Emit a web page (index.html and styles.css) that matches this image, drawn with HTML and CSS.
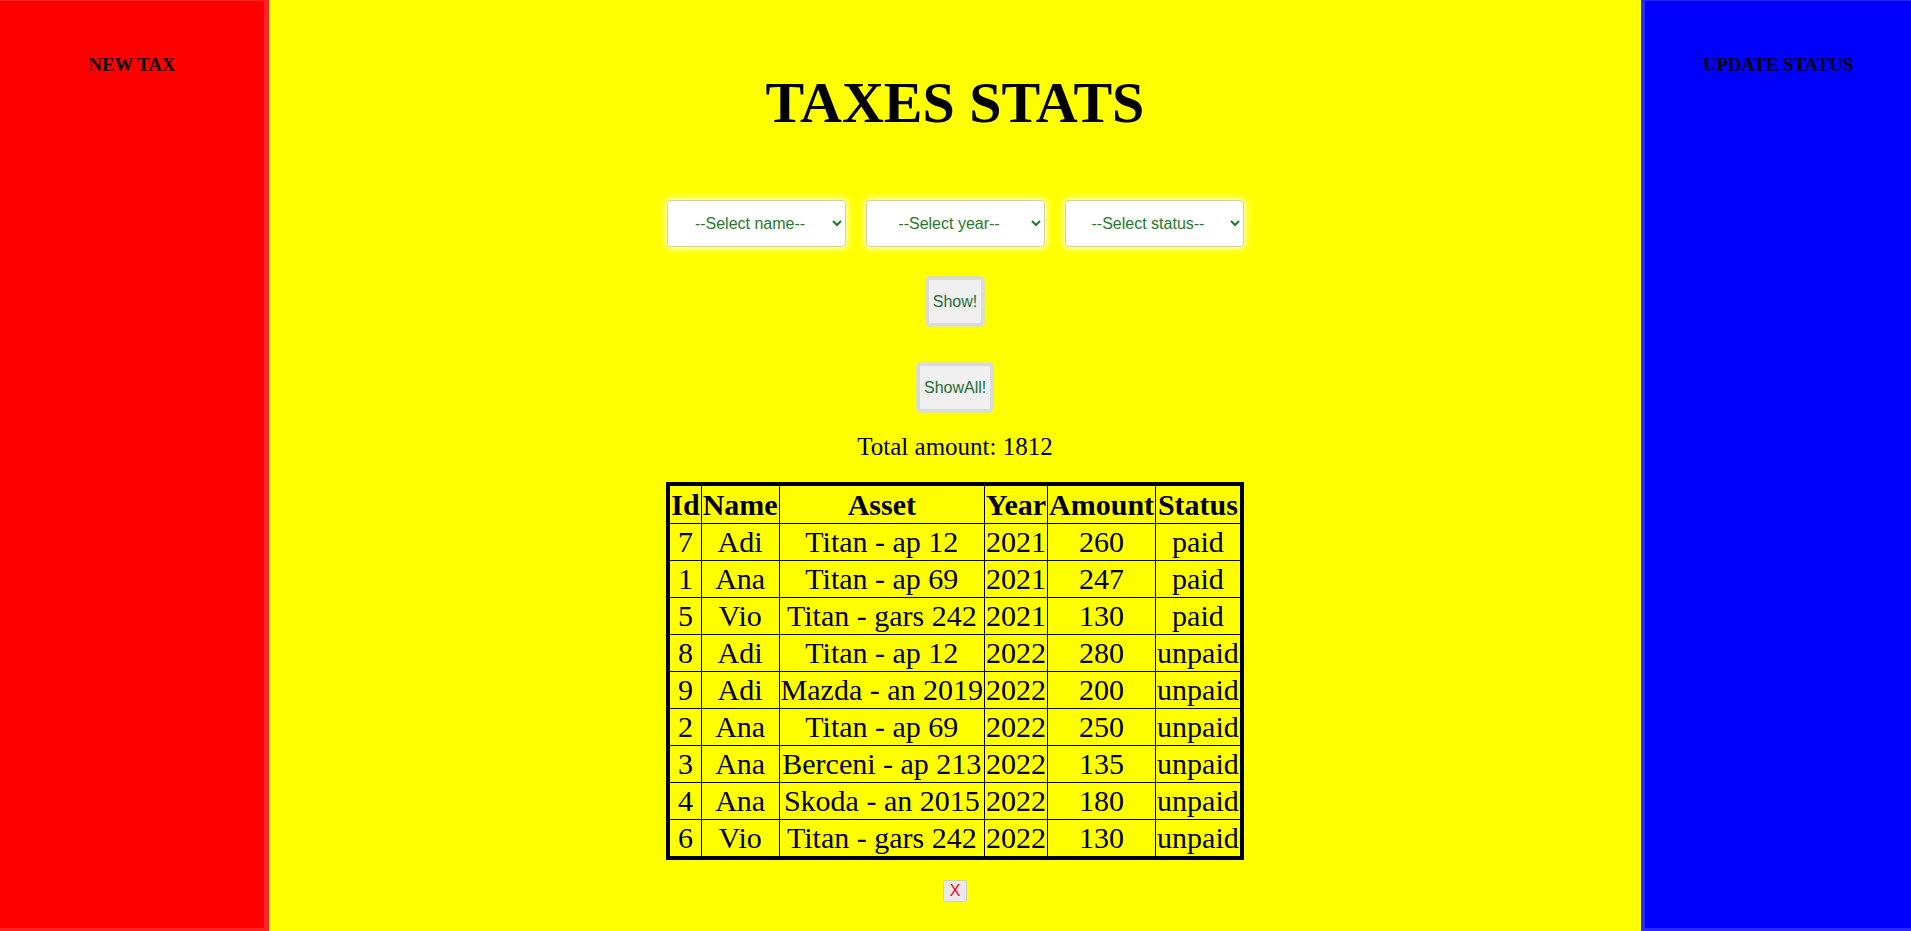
FILE: index.html
```html
<!DOCTYPE html>
<html>
<head>
<meta charset="utf-8">
<title>Taxes Stats</title>
<link rel="stylesheet" href="styles.css">
</head>
<body>
<div class="layout">
  <aside class="panel panel-red">
    <h3 class="panel-title">NEW TAX</h3>
  </aside>
  <main class="main">
    <h1 class="title">TAXES STATS</h1>
    <div class="filters">
      <select class="filter"><option>--Select name--</option></select>
      <select class="filter"><option>--Select year--</option></select>
      <select class="filter"><option>--Select status--</option></select>
    </div>
    <button class="btn btn-show"><span class="caret"></span>Show!</button>
    <button class="btn btn-showall">ShowAll!</button>
    <p class="total">Total amount: 1812</p>
    <table class="stats">
      <thead>
        <tr><th>Id</th><th>Name</th><th>Asset</th><th>Year</th><th>Amount</th><th>Status</th></tr>
      </thead>
      <tbody>
        <tr><td>7</td><td>Adi</td><td>Titan - ap 12</td><td>2021</td><td>260</td><td>paid</td></tr>
        <tr><td>1</td><td>Ana</td><td>Titan - ap 69</td><td>2021</td><td>247</td><td>paid</td></tr>
        <tr><td>5</td><td>Vio</td><td>Titan - gars 242</td><td>2021</td><td>130</td><td>paid</td></tr>
        <tr><td>8</td><td>Adi</td><td>Titan - ap 12</td><td>2022</td><td>280</td><td>unpaid</td></tr>
        <tr><td>9</td><td>Adi</td><td>Mazda - an 2019</td><td>2022</td><td>200</td><td>unpaid</td></tr>
        <tr><td>2</td><td>Ana</td><td>Titan - ap 69</td><td>2022</td><td>250</td><td>unpaid</td></tr>
        <tr><td>3</td><td>Ana</td><td>Berceni - ap 213</td><td>2022</td><td>135</td><td>unpaid</td></tr>
        <tr><td>4</td><td>Ana</td><td>Skoda - an 2015</td><td>2022</td><td>180</td><td>unpaid</td></tr>
        <tr><td>6</td><td>Vio</td><td>Titan - gars 242</td><td>2022</td><td>130</td><td>unpaid</td></tr>
      </tbody>
    </table>
    <button class="btn-close">X</button>
  </main>
  <aside class="panel panel-blue">
    <h3 class="panel-title">UPDATE STATUS</h3>
  </aside>
</div>
</body>
</html>
```

FILE: styles.css
```css
html, body {
  margin: 0;
  padding: 0;
  height: 100%;
  overflow: hidden;
}

body {
  font-family: "Liberation Serif", "Times New Roman", serif;
  background: #ffff00;
}

.layout {
  display: flex;
  height: 100vh;
}

.panel {
  box-sizing: border-box;
  display: flex;
  flex-direction: column;
  align-items: center;
  border-top: 1px solid;
  border-bottom: 3px solid;
}

.panel-red {
  width: 269px;
  background: #ff0000;
  border-color: #ff2424;
  border-right: 5px solid #ff2424;
}

.panel-blue {
  width: 270px;
  background: #0000ff;
  border-color: #2a2aff;
  border-left: 4px solid #2a2aff;
}

.panel-title {
  margin: 53px 0 0;
  font-size: 18.72px;
  line-height: 22px;
  font-weight: bold;
  color: #000;
}

.main {
  flex: 1;
  display: flex;
  flex-direction: column;
  align-items: center;
  background: #ffff00;
}

.title {
  margin: 70px 0 0;
  font-size: 58px;
  line-height: 66px;
  font-weight: bold;
}

.filters {
  display: flex;
  gap: 20px;
  margin-top: 64px;
}

.filter {
  box-sizing: border-box;
  width: 179px;
  height: 47px;
  padding: 0 8px;
  font-family: "Liberation Sans", Arial, sans-serif;
  font-size: 16px;
  color: #1f7a2a;
  text-align: center;
  text-align-last: center;
  background: #fff;
  border: 1px solid #cfcfb0;
  border-radius: 4px;
  box-shadow: 0 0 6px 2px rgba(255, 255, 255, 0.75);
}

.btn {
  box-sizing: border-box;
  height: 49px;
  padding: 0 4px;
  font-family: "Liberation Sans", Arial, sans-serif;
  font-size: 16px;
  color: #1f6e35;
  background: #efefef;
  border: 3px solid #dadada;
  border-radius: 4px;
  box-shadow: 0 0 0 1px #e2e2b0;
}

.btn-show {
  width: 58px;
  margin-top: 30px;
  display: flex;
  align-items: center;
  justify-content: center;
}

.caret {
  display: inline-block;
  width: 1px;
  height: 18px;
  background: #1f6e35;
}

.btn-showall {
  width: 76px;
  margin-top: 37px;
}

.total {
  margin: 20px 0 0;
  font-size: 25px;
  line-height: 29px;
}

.stats {
  margin-top: 21px;
  border-collapse: collapse;
  border: 4px solid #000;
  font-size: 30px;
  text-align: center;
}

.stats th,
.stats td {
  border: 1px solid #000;
  padding: 1px;
  line-height: 34px;
  font-weight: normal;
}

.stats th {
  font-weight: bold;
  line-height: 35px;
}

.btn-close {
  margin-top: 20px;
  box-sizing: border-box;
  width: 24px;
  height: 22px;
  padding: 0;
  font-family: "Liberation Sans", Arial, sans-serif;
  font-size: 16px;
  color: #ff0000;
  background: #e9e9e9;
  border: 1px solid #cfcfcf;
  border-radius: 2px;
}
```
